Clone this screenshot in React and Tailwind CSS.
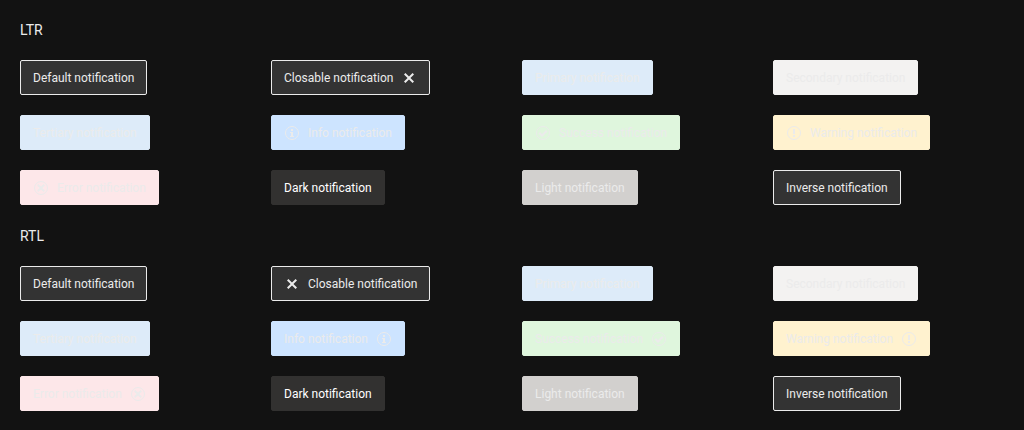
import React from "react";

const ring = <circle cx="256" cy="256" r="208" fill="none" stroke="currentColor" strokeWidth="32" />;

const icons = {
  close: (
    <path d="M416 141.3 370.7 96 256 210.7 141.3 96 96 141.3 210.7 256 96 370.7 141.3 416 256 301.3 370.7 416 416 370.7 301.3 256z" />
  ),
  info: (
    <>
      {ring}
      <path d="M224 128h64v64h-64zM192 224h96v128h32v32H192v-32h32v-96h-32z" />
    </>
  ),
  success: (
    <>
      {ring}
      <path d="M224 290 158 224l-45 45 111 111 175-175-45-45z" />
    </>
  ),
  warning: (
    <>
      {ring}
      <path d="M224 128h64v160h-64zM224 320h64v64h-64z" />
    </>
  ),
  error: (
    <>
      {ring}
      <path d="M384 173.3 338.7 128 256 210.7 173.3 128 128 173.3 210.7 256 128 338.7 173.3 384 256 301.3 338.7 384 384 338.7 301.3 256z" />
    </>
  ),
};

function Icon({ name }) {
  return (
    <svg viewBox="0 0 512 512" className="size-4 shrink-0" fill="currentColor" aria-hidden="true">
      {icons[name]}
    </svg>
  );
}

const outlined = "border-[#ebebeb] bg-[#333333] text-[#ebebeb]";

const notifications = [
  { text: "Default notification", style: outlined },
  { text: "Closable notification", style: outlined, closable: true },
  { text: "Primary notification", style: "border-[#ddebf9] bg-[#ddebf9] text-[#ebebeb]" },
  { text: "Secondary notification", style: "border-[#f3f2f1] bg-[#f3f2f1] text-[#ebebeb]" },
  { text: "Tertiary notification", style: "border-[#ddebf9] bg-[#ddebf9] text-[#ebebeb]" },
  { text: "Info notification", style: "border-[#cde4ff] bg-[#cde4ff] text-[#ebebeb]", icon: "info" },
  { text: "Success notification", style: "border-[#dff6dd] bg-[#dff6dd] text-[#ebebeb]", icon: "success" },
  { text: "Warning notification", style: "border-[#fff2cf] bg-[#fff2cf] text-[#ebebeb]", icon: "warning" },
  { text: "Error notification", style: "border-[#fde7e9] bg-[#fde7e9] text-[#ebebeb]", icon: "error" },
  { text: "Dark notification", style: "border-[#323130] bg-[#323130] text-white" },
  { text: "Light notification", style: "border-[#d2d0ce] bg-[#d2d0ce] text-[#ebebeb]" },
  { text: "Inverse notification", style: outlined },
];

function Notification({ text, style, icon, closable }) {
  return (
    <div
      role="status"
      className={`flex items-center gap-2 rounded-xs border px-3 pt-2 pb-[7px] text-xs leading-[18px] ${style}`}
    >
      {icon && <Icon name={icon} />}
      <span className="whitespace-nowrap">{text}</span>
      {closable && (
        <button type="button" aria-label="Close" className="size-4 cursor-pointer">
          <Icon name="close" />
        </button>
      )}
    </div>
  );
}

function Section({ title, rtl }) {
  return (
    <section>
      <h2 className="mb-5 text-sm leading-5">{title}</h2>
      <div className="grid grid-cols-4 gap-5">
        {notifications.map((item) => (
          <div key={item.text} className="flex">
            <div dir={rtl ? "rtl" : "ltr"}>
              <Notification {...item} />
            </div>
          </div>
        ))}
      </div>
    </section>
  );
}

export default function App() {
  return (
    <main className="flex min-h-screen flex-col gap-[21px] bg-[#121212] p-5 font-['Roboto',sans-serif] text-[#ebebeb]">
      <Section title="LTR" />
      <Section title="RTL" rtl />
    </main>
  );
}
